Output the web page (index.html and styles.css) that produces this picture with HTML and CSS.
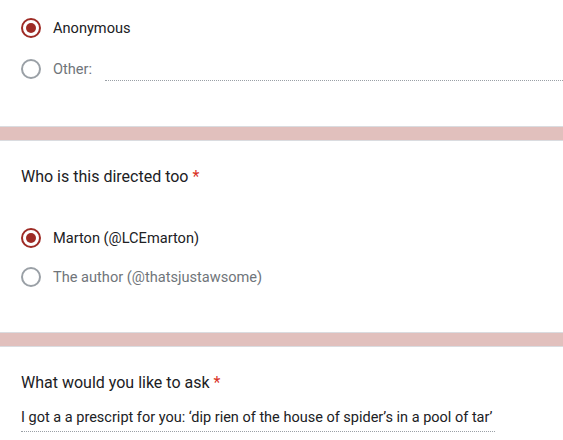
FILE: index.html
```html
<!DOCTYPE html>
<html>
<head>
<meta charset="utf-8">
<link rel="stylesheet" href="styles.css">
</head>
<body>
<div class="card card-first">
  <div class="option selected">
    <span class="radio"><span class="dot"></span></span>
    <span class="label">Anonymous</span>
  </div>
  <div class="option other">
    <span class="radio"></span>
    <span class="label muted">Other:</span>
    <span class="other-input"></span>
  </div>
</div>
<div class="band"></div>
<div class="card card-q">
  <div class="title">Who is this directed too <span class="req">*</span></div>
  <div class="options">
    <div class="option selected">
      <span class="radio"><span class="dot"></span></span>
      <span class="label">Marton (@LCEmarton)</span>
    </div>
    <div class="option">
      <span class="radio"></span>
      <span class="label muted">The author (@thatsjustawsome)</span>
    </div>
  </div>
</div>
<div class="band"></div>
<div class="card card-last">
  <div class="title">What would you like to ask <span class="req">*</span></div>
  <div class="answer">I got a a prescript for you: ‘dip rien of the house of spider’s in a pool of tar’</div>
</div>
</body>
</html>
```

FILE: styles.css
```css
html, body {
  margin: 0;
  padding: 0;
  background: #ffffff;
  font-family: Roboto, "Liberation Sans", sans-serif;
  color: #202124;
  overflow: hidden;
}
.card {
  background: #ffffff;
  padding-left: 21px;
}
.card-first {
  height: 126px;
  box-sizing: border-box;
  padding-top: 7px;
}
.card-q {
  height: 191px;
  box-sizing: border-box;
  padding-top: 24px;
}
.card-last {
  padding-top: 24px;
}
.band {
  height: 13px;
  background: #e1c0bd;
  border-top: 1px solid #dadce0;
  border-bottom: 1px solid #dadce0;
}
.option {
  display: flex;
  align-items: center;
  height: 41px;
}
.options {
  margin-top: 29px;
}
.options .option {
  height: 39px;
}
.radio {
  width: 20px;
  height: 20px;
  box-sizing: border-box;
  border: 2px solid #9aa0a6;
  border-radius: 50%;
  display: flex;
  align-items: center;
  justify-content: center;
  flex: none;
}
.selected .radio {
  border-color: #9e2b25;
}
.dot {
  width: 10px;
  height: 10px;
  border-radius: 50%;
  background: #9e2b25;
}
.label {
  margin-left: 12px;
  font-size: 14.6px;
  line-height: 20px;
  color: #202124;
}
.label.muted {
  color: #70757a;
}
.other-input {
  flex: 1;
  align-self: flex-start;
  height: 32px;
  margin-left: 13px;
  border-bottom: 1px dotted #9aa0a6;
}
.title {
  font-size: 16px;
  line-height: 24px;
  color: #202124;
}
.req {
  color: #d93025;
}
.answer {
  display: inline-block;
  margin-top: 13px;
  font-size: 14.5px;
  line-height: 20px;
  color: #202124;
  border-bottom: 1px dotted #9aa0a6;
  padding-bottom: 3px;
  padding-right: 3px;
}
```
